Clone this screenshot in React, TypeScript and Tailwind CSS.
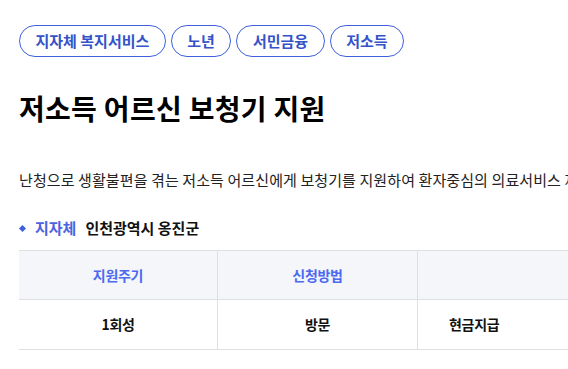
const tags = ["지자체 복지서비스", "노년", "서민금융", "저소득"];

export default function App() {
  return (
    <div
      className="min-h-screen overflow-hidden bg-white pl-[19px] pt-[25px] text-[#111]"
      style={{ fontFamily: '"Noto Sans CJK KR", "Noto Sans", sans-serif' }}
    >
      <div className="flex gap-[5px]">
        {tags.map((tag) => (
          <span
            key={tag}
            className="flex h-8 items-center rounded-full border border-[#3f5fdc] px-[15.5px] text-[15px] font-bold text-[#3553c9]"
          >
            {tag}
          </span>
        ))}
      </div>

      <h1 className="mt-[32px] text-[28px] font-bold leading-[38px] tracking-[0.3px] text-black">
        저소득 어르신 보청기 지원
      </h1>

      <p className="mt-[42px] whitespace-nowrap text-[15px] leading-[22px] tracking-[0.1px] text-[#222]">
        난청으로 생활불편을 겪는 저소득 어르신에게 보청기를 지원하여 환자중심의 의료서비스 제공
      </p>

      <div className="mt-[26px] flex items-center text-[15px] font-bold leading-[22px]">
        <span className="ml-[1px] mr-[10px] h-[5px] w-[5px] rotate-45 bg-[#3f5fdc]" />
        <span className="text-[#4a63e0]">지자체</span>
        <span className="ml-[9px] text-[#111]">인천광역시 옹진군</span>
      </div>

      <div className="mt-[11px] w-[700px] border-y border-[#dedfe3] text-[14px] font-bold tracking-[-0.3px]">
        <div className="grid h-[49px] grid-cols-[199px_200px_281px] border-b border-[#dedfe3] bg-[#f5f6fa] text-[#4b6af0]">
          <div className="flex items-center justify-center border-r border-[#dedfe3]">지원주기</div>
          <div className="flex items-center justify-center border-r border-[#dedfe3]">신청방법</div>
          <div />
        </div>
        <div className="grid h-[49px] grid-cols-[199px_200px_281px] text-[#111]">
          <div className="flex items-center justify-center border-r border-[#dedfe3]">1회성</div>
          <div className="flex items-center justify-center border-r border-[#dedfe3]">방문</div>
          <div className="flex items-center pl-[31px]">현금지급</div>
        </div>
      </div>
    </div>
  );
}
